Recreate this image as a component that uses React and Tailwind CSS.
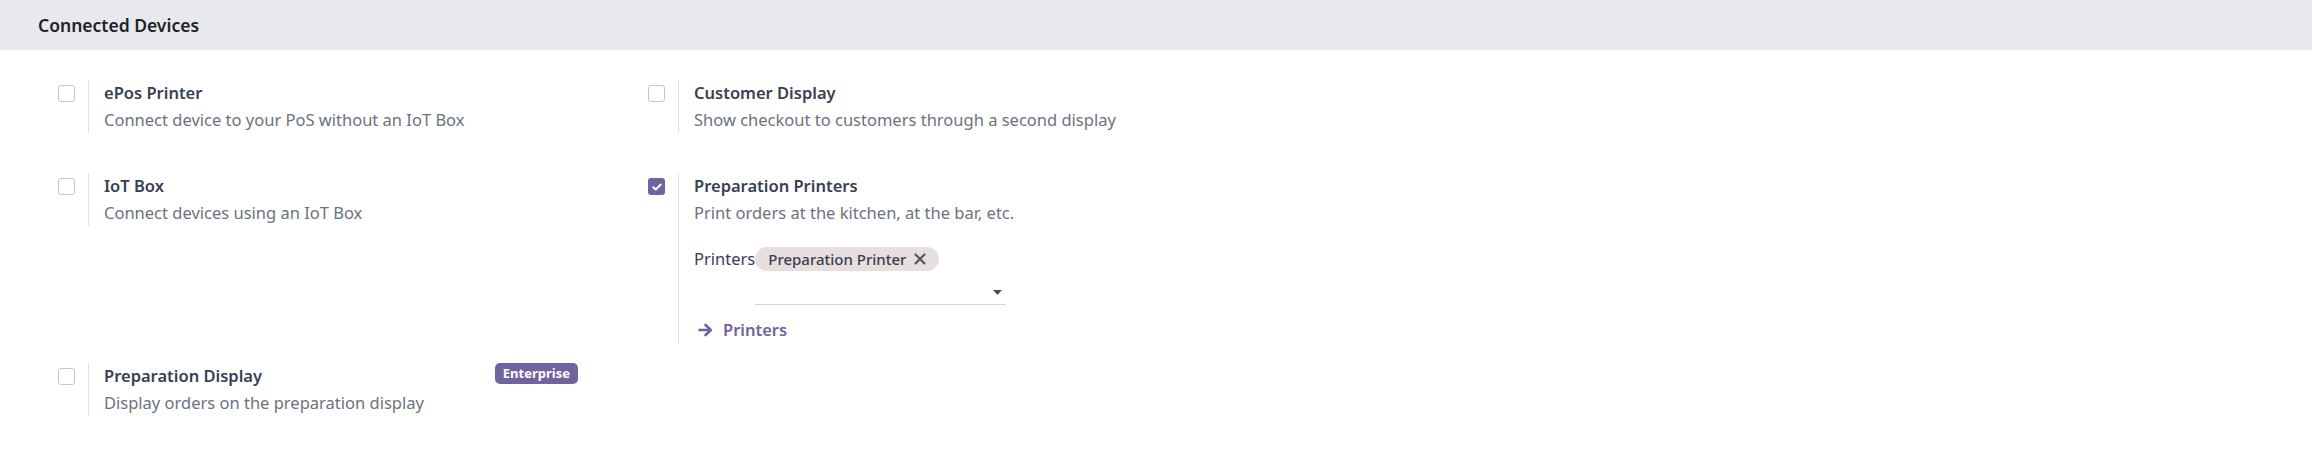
import React from "react";

function Checkbox({ checked }) {
  if (checked) {
    return (
      <span className="flex h-[17px] w-[17px] items-center justify-center rounded-[3px] bg-[#71639e]">
        <svg width="10" height="8" viewBox="0 0 10 8" fill="none">
          <path d="M1.3 4.2 L3.8 6.5 L8.7 1.5" stroke="#fff" strokeWidth="1.9" strokeLinecap="round" strokeLinejoin="round" />
        </svg>
      </span>
    );
  }
  return <span className="block h-[17px] w-[17px] rounded-[3px] border border-[#c2c5c9] bg-white" />;
}

function Setting({ title, desc, checked, badge, children }) {
  return (
    <div className="flex">
      <div className="w-[50px] shrink-0 pl-[20px] pt-[5px]">
        <Checkbox checked={checked} />
      </div>
      <div className="flex-1 border-l border-[#dfe1e4] pl-[15px] pr-[50px]">
        <div className="flex items-start justify-between">
          <div className="text-[16.5px] leading-[26px] font-semibold text-[#374151]">{title}</div>
          {badge && (
            <span className="rounded-[5px] bg-[#71639e] px-[8px] text-[13px] leading-[21px] font-bold text-white">
              {badge}
            </span>
          )}
        </div>
        <div className="text-[16.5px] leading-[27px] text-[#6b7280]">{desc}</div>
        {children}
      </div>
    </div>
  );
}

export default function App() {
  return (
    <div className="h-[466px] w-[2312px] bg-white font-['Noto_Sans',sans-serif]">
      <div className="flex h-[50px] items-center bg-[#e7e9ed] pl-[38px] text-[17.5px] font-semibold text-[#1f2328]">
        Connected Devices
      </div>

      <div className="pl-[38px]">
        <div className="mt-[30px] grid grid-cols-[590px_590px]">
          <Setting title="ePos Printer" desc="Connect device to your PoS without an IoT Box" />
          <Setting title="Customer Display" desc="Show checkout to customers through a second display" />
        </div>

        <div className="mt-[40px] grid grid-cols-[590px_590px] items-start">
          <Setting title="IoT Box" desc="Connect devices using an IoT Box" />
          <Setting checked title="Preparation Printers" desc="Print orders at the kitchen, at the bar, etc.">
            <div className="mt-[21px] flex items-start">
              <span className="text-[16.5px] leading-[24px] text-[#374151]">Printers</span>
              <div className="flex w-[251px] flex-wrap">
                <span className="flex h-[24px] items-center gap-[8px] overflow-hidden rounded-full bg-[#e6dfdd] pl-[13px] pr-[13px] text-[15px] font-medium text-[#374151]">
                  <span className="leading-[24px]">Preparation Printer</span>
                  <svg width="12" height="12" viewBox="0 0 12 12">
                    <path d="M1.5 1.5 L10.5 10.5 M10.5 1.5 L1.5 10.5" stroke="#555a60" strokeWidth="2.2" strokeLinecap="round" />
                  </svg>
                </span>
                <div className="flex h-[34px] w-full items-center justify-end border-b border-[#cfd2d6] pr-[4px]">
                  <svg width="9" height="5" viewBox="0 0 9 5" className="mt-[10px]">
                    <path d="M0 0 L9 0 L4.5 5 Z" fill="#4b4f55" />
                  </svg>
                </div>
              </div>
            </div>
            <div className="mt-[12px] flex items-center gap-[10px] text-[16.5px] leading-[26px] font-semibold text-[#71639e]">
              <svg width="15" height="14" viewBox="0 0 15 14" className="ml-[4px]">
                <path d="M1.5 7 H12 M7.5 2 L12.8 7 L7.5 12" stroke="#71639e" strokeWidth="2.6" fill="none" strokeLinecap="round" strokeLinejoin="round" />
              </svg>
              <span>Printers</span>
            </div>
          </Setting>
        </div>

        <div className="mt-[20px] grid grid-cols-[590px_590px]">
          <Setting title="Preparation Display" desc="Display orders on the preparation display" badge="Enterprise" />
        </div>
      </div>
    </div>
  );
}
